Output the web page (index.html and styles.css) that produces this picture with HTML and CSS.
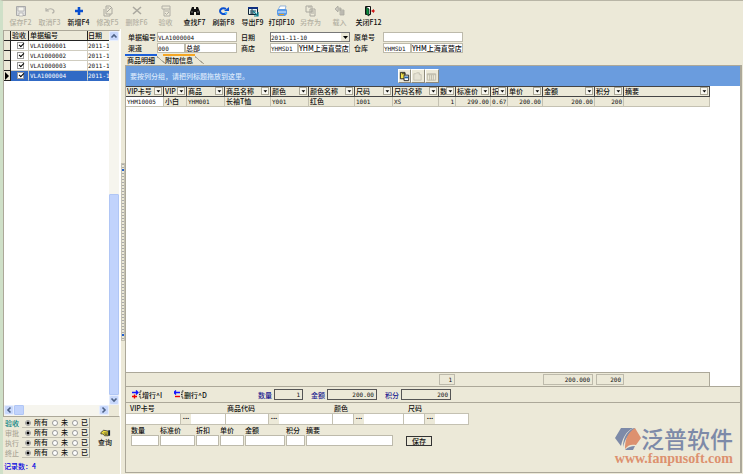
FILE: index.html
```
<!DOCTYPE html>
<html lang="zh-CN">
<head>
<meta charset="utf-8">
<title>单据管理</title>
<link rel="stylesheet" href="styles.css">
</head>
<body>
<svg class="defs" aria-hidden="true">
  <symbol id="down" viewBox="0 0 8 8"><path d="M2 3h5L4.500 6z" fill="#000"/></symbol>
  <symbol id="chev" viewBox="0 0 8 8"><path d="M1.500 5.500L4 3l2.500 2.500" fill="none" stroke="#4d6185" stroke-width="1.600"/></symbol>
  <symbol id="rowadd" viewBox="0 0 10 9"><path d="M0 2.500h6M4 .5l2 2-2 2" stroke="#11f" fill="none" stroke-width="1.300"/><path d="M0 6.500h5M2.500 4.500v4" stroke="#e00" stroke-width="1.400"/><path d="M9.500 1H8v7h1.500M8 4.500H7" stroke="#222" fill="none" stroke-dasharray="1.500 .6"/></symbol>
  <symbol id="rowdel" viewBox="0 0 10 9"><path d="M0 2.500h6M2 .5l-2 2 2 2" stroke="#11f" fill="none" stroke-width="1.300"/><path d="M1 6.500h5" stroke="#e00" stroke-width="1.400"/><path d="M9.500 1H8v7h1.500M8 4.500H7" stroke="#222" fill="none" stroke-dasharray="1.500 .6"/></symbol>
</svg>

<nav class="toolbar">
  <button disabled><svg viewBox="0 0 12 12"><path d="M1.500 1.500h9v9h-9z" fill="#ddd" stroke="#aaa"/><path d="M3 2h6v4H3zM4 8h4v3H4z" fill="#f6f5ee" stroke="#aaa" stroke-width=".7"/></svg>保存F2</button>
  <button disabled><svg viewBox="0 0 12 12"><path d="M2 3v3h3M2 6c2-3 7-3 8 0 0 2-1 2-2 2" fill="none" stroke="#b4b2aa" stroke-width="1.200"/></svg>取消F3</button>
  <button><svg viewBox="0 0 12 12"><path d="M6 2v8M2 6h8" stroke="#0a50d0" stroke-width="2.600"/></svg>新增F4</button>
  <button disabled><svg viewBox="0 0 12 12"><path d="M4 1h4l2 2v6H4zM2 4v7h6V9M5 7l4-4M5 3h2" fill="none" stroke="#aaa89f"/></svg>修改F5</button>
  <button disabled><svg viewBox="0 0 12 12"><path d="M2 2l8 7M10 2L2 9" stroke="#aaa89f" stroke-width="1.600"/></svg>删除F6</button>
  <button disabled><svg viewBox="0 0 12 12"><path d="M2 1h8v3H2zM4 4v7h6V4M5 6h4M5 8l1.500 1.500L9 7" fill="none" stroke="#b0aea5"/></svg>验收</button>
  <button><svg viewBox="0 0 12 12"><path d="M3 2h2v2h2V2h2l2 5v3H7V7H5v3H1V7z" fill="#111"/><path d="M3 6v2M9 6v2" stroke="#999" stroke-width=".7"/></svg>查找F7</button>
  <button><svg viewBox="0 0 12 12"><path d="M8 8.500C5 10 2 8 2 6s3-4 6-2" fill="none" stroke="#0a50d0" stroke-width="2"/><path d="M6 6h5V2z" fill="#0a50d0"/><circle cx="8" cy="8" r="1.300" fill="#4ab0ff"/></svg>刷新F8</button>
  <button><svg viewBox="0 0 12 12"><path d="M1.500 2.500h9v7h-9z" fill="#dff1f4" stroke="#123"/><path d="M1 3h10" stroke="#103080" stroke-width="2"/><path d="M3 6h6M3 8h4M5 4v5" stroke="#245"/><path d="M6 6l5 5M7 11h4V7" stroke="#0c8090" stroke-width="1.200" fill="none"/></svg>导出F9</button>
  <button><svg viewBox="0 0 12 12"><path d="M4 1h6L9 5H2z" fill="#fff" stroke="#6a9ad0" stroke-width=".7"/><path d="M1 5l2-1h7l1 1v4l-2 2H2L1 9z" fill="#5b9ae6"/><path d="M2 7h8" stroke="#e3f1ff"/><path d="M3 9.500h5" stroke="#e8a020"/></svg>打印F10</button>
  <button disabled><svg viewBox="0 0 12 12"><path d="M1 1h6v6H1zM3 2h3M5 4h5v7H5zM6 6h3M6 8h3" fill="none" stroke="#aaa89f"/></svg>另存为</button>
  <button disabled><svg viewBox="0 0 12 12"><path d="M1 4l3-3v2h3v2H4v2zM6 5h4v5H6zM7 7h3M7 9h3" fill="#c8c6bd" stroke="#aaa89f" stroke-width=".8"/></svg>载入</button>
  <button><svg viewBox="0 0 12 12"><path d="M2.500 1.500h5v8h-5z" fill="#fff" stroke="#111"/><path d="M3 2l3 2v7L3 9z" fill="#0a9040" stroke="#111" stroke-width=".7"/><path d="M11 4v4L8 6z" fill="#d01818"/><path d="M10 6h1.500" stroke="#d01818" stroke-width="2"/></svg>关闭F12</button>
</nav>

<div class="work">
  <aside class="side">
    <div class="list">
      <div class="list-view">
        <table class="docs">
          <colgroup><col class="w-ind"><col class="w-chk"><col class="w-no"><col></colgroup>
          <thead><tr><th></th><th>验收</th><th>单据编号</th><th>日期</th></tr></thead>
          <tbody>
            <tr><th></th><td><input type="checkbox" checked aria-label="验收"></td><td>VLA1000001</td><td>2011-1</td></tr>
            <tr><th></th><td><input type="checkbox" checked aria-label="验收"></td><td>VLA1000002</td><td>2011-1</td></tr>
            <tr><th></th><td><input type="checkbox" checked aria-label="验收"></td><td>VLA1000003</td><td>2011-1</td></tr>
            <tr class="current"><th><svg viewBox="0 0 5 8"><path d="M1 0l4 4-4 4z"/></svg></th><td><input type="checkbox" checked aria-label="验收"></td><td>VLA1000004</td><td>2011-1</td></tr>
          </tbody>
        </table>
      </div>
      <div class="vbar"><button aria-label="向上"><svg><use href="#chev"/></svg></button><i class="gap"></i><i class="thumb"></i><button aria-label="向下" class="flip"><svg><use href="#chev"/></svg></button></div>
      <div class="hbar"><button aria-label="向左" class="left"><svg><use href="#chev"/></svg></button><i class="thumb"></i><i class="gap"></i><button aria-label="向右" class="right"><svg><use href="#chev"/></svg></button></div>
    </div>
    <div class="query">
      <div class="filters">
        <fieldset class="on"><legend>验收</legend><div><label><input type="radio" name="a" checked>所有</label><label><input type="radio" name="a">未</label><label><input type="radio" name="a">已</label></div></fieldset>
        <fieldset><legend>审批</legend><div><label><input type="radio" name="b" checked>所有</label><label><input type="radio" name="b">未</label><label><input type="radio" name="b">已</label></div></fieldset>
        <fieldset><legend>执行</legend><div><label><input type="radio" name="c" checked>所有</label><label><input type="radio" name="c">未</label><label><input type="radio" name="c">已</label></div></fieldset>
        <fieldset><legend>终止</legend><div><label><input type="radio" name="d" checked>所有</label><label><input type="radio" name="d">未</label><label><input type="radio" name="d">已</label></div></fieldset>
      </div>
      <button class="find"><svg viewBox="0 0 12 8"><path d="M1 3.500L4 1l5 1v5H5L3 5H1z" fill="#f0e040" stroke="#222" stroke-width=".8"/><path d="M9 1h2v6H9z" fill="#123"/><path d="M4 4h4M5 5.500h3" stroke="#222" stroke-width=".7"/></svg>查询</button>
    </div>
    <p class="count">记录数：4</p>
  </aside>
  <div class="splitter"><i></i></div>

  <main class="main">
    <form class="head">
      <label for="no">单据编号</label><input id="no" class="wide" value="VLA1000004">
      <label for="date">日期</label><span class="combo"><select id="date"><option>2011-11-10</option></select><svg><use href="#down"/></svg></span>
      <label for="orig">原单号</label><input id="orig" class="wide">
      <label for="chan">渠道</label><input id="chan" value="000"><input class="zh" value="总部" aria-label="渠道名称">
      <label for="shop">商店</label><input id="shop" value="YHMSD1"><input class="zh" value="YHM上海直营店" aria-label="商店名称">
      <label for="store">仓库</label><input id="store" value="YHMSD1"><input class="zh" value="YHM上海直营店" aria-label="仓库名称">
    </form>
    <div class="tabs"><button class="active">商品明细</button><button>附加信息</button></div>
    <section class="panel">
      <div class="group"><span>要按列分组，请把列标题拖放到这里。</span>
        <div class="tools">
          <button aria-label="复制"><svg viewBox="0 0 12 12"><path d="M1.500 1.500h5v7h-5z" fill="#f5e54a" stroke="#222"/><path d="M5.500 4.500h5v6h-5z" fill="#fff" stroke="#222"/><path d="M6 6h4v2H6z" fill="#26a"/><path d="M3 3h4" stroke="#222"/></svg></button>
          <button aria-label="粘贴"><svg viewBox="0 0 12 12"><path d="M2 10V3h2l1-1h3v2h2v6z" fill="#e6e3d4" stroke="#c4c1b2"/></svg></button>
          <button aria-label="列"><svg viewBox="0 0 12 12"><path d="M1.500 3h9v7h-9zM1 4h10M4 4v6M6 4v6M8 4v6" fill="none" stroke="#bdbaab"/></svg></button>
        </div>
      </div>
      <div class="sheet">
        <table class="items">
          <colgroup><col class="c38"><col class="c23"><col class="c38"><col class="c46"><col class="c38"><col class="c46"><col class="c38"><col class="c46"><col class="c17"><col class="c35"><col class="c17"><col class="c35"><col class="c52"><col class="c29"><col class="c86"></colgroup>
          <thead><tr>
            <th><div><span>VIP卡号</span><button aria-label="筛选"><svg><use href="#down"/></svg></button></div></th>
            <th><div><span>VIP</span><button aria-label="筛选"><svg><use href="#down"/></svg></button></div></th>
            <th><div><span>商品</span><button aria-label="筛选"><svg><use href="#down"/></svg></button></div></th>
            <th><div><span>商品名称</span><button aria-label="筛选"><svg><use href="#down"/></svg></button></div></th>
            <th><div><span>颜色</span><button aria-label="筛选"><svg><use href="#down"/></svg></button></div></th>
            <th><div><span>颜色名称</span><button aria-label="筛选"><svg><use href="#down"/></svg></button></div></th>
            <th><div><span>尺码</span><button aria-label="筛选"><svg><use href="#down"/></svg></button></div></th>
            <th><div><span>尺码名称</span><button aria-label="筛选"><svg><use href="#down"/></svg></button></div></th>
            <th><div><span>数</span><button aria-label="筛选"><svg><use href="#down"/></svg></button></div></th>
            <th><div><span>标准价</span><button aria-label="筛选"><svg><use href="#down"/></svg></button></div></th>
            <th><div><span>折</span><button aria-label="筛选"><svg><use href="#down"/></svg></button></div></th>
            <th><div><span>单价</span><button aria-label="筛选"><svg><use href="#down"/></svg></button></div></th>
            <th><div><span>金额</span><button aria-label="筛选"><svg><use href="#down"/></svg></button></div></th>
            <th><div><span>积分</span><button aria-label="筛选"><svg><use href="#down"/></svg></button></div></th>
            <th><div><span>摘要</span><button aria-label="筛选"><svg><use href="#down"/></svg></button></div></th>
          </tr></thead>
          <tbody><tr><td class="focus">YHM10005</td><td class="zh">小白</td><td>YHM001</td><td class="zh">长袖T恤</td><td>Y001</td><td class="zh">红色</td><td>1001</td><td>XS</td><td class="num">1</td><td class="num">299.00</td><td class="num">0.67</td><td class="num">200.00</td><td class="num">200.00</td><td class="num">200</td><td></td></tr></tbody>
        </table>
        <div class="totals"><output class="t-qty">1</output><output class="t-sum">200.000</output><output class="t-pts">200</output></div>
      </div>
      <div class="summary">
        <button><svg><use href="#rowadd"/></svg>增行^I</button>
        <button><svg><use href="#rowdel"/></svg>删行^D</button>
        <label class="s-qty">数量<output>1</output></label>
        <label class="s-sum">金额<output>200.00</output></label>
        <label class="s-pts">积分<output>200</output></label>
      </div>
      <form class="entry">
        <div class="codes">
          <div><label for="vip">VIP卡号</label><span><input id="vip" class="c55"><button type="button">...</button><input class="c35" aria-label="VIP名称"></span></div>
          <div><label for="code">商品代码</label><span><input id="code" class="c43"><button type="button">...</button><input class="c54" aria-label="商品名称"></span></div>
          <div><label for="color">颜色</label><span><input id="color" class="c21"><button type="button">...</button><input class="c40" aria-label="颜色名称"></span></div>
          <div><label for="size">尺码</label><span><input id="size" class="c21"><button type="button">...</button><input class="c34" aria-label="尺码名称"></span></div>
        </div>
        <div class="values">
          <label class="c28">数量<input></label><label class="c35">标准价<input></label><label class="c23">折扣<input></label><label class="c24">单价<input></label><label class="c40">金额<input></label><label class="c19">积分<input></label><label class="c87">摘要<input></label>
          <button type="button" class="save">保存</button>
        </div>
        <div class="brand">
          <div class="brand-name"><svg viewBox="0 0 26 24"><path d="M6 1h12C11 5 8 10 6 19L0 11z" fill="#7d8aa8"/><path d="M8 20C8 11 12 4 19 1h1l-3 5c-4 2-7 6-9 14z" fill="#7d8aa8"/><path d="M20 1l6 10-5 7c-5-1-8 0-11 4 0-9 2-16 10-21z" fill="#dd916f"/><path d="M10 23c3-3 6-4 10-4l-2 4z" fill="#7d8aa8"/></svg><span>泛普软件</span></div>
          <div class="brand-url">www.fanpusoft.com</div>
        </div>
      </form>
    </section>
  </main>
</div>
</body>
</html>
```
FILE: styles.css
```
* { box-sizing: border-box; }
html, body { height: 100%; }
body {
  margin: 0;
  display: flex;
  flex-direction: column;
  background: #ece9d8;
  border-top: 1px solid #b8b5a6;
  border-left: 3px solid #cfe0c8;
  font: 500 7px/10px "Noto Sans CJK SC", sans-serif;
  color: #111;
}
button, input, select { font: inherit; color: inherit; margin: 0; padding: 0; border: 0; border-radius: 0; background: none; }
svg { display: block; }
i { display: block; }
p { margin: 0; }
.defs { position: absolute; width: 0; height: 0; }

.toolbar { display: flex; height: 28px; padding: 4px 0 0 3px; flex: none; }
.toolbar button { width: 29px; display: flex; flex-direction: column; align-items: center; white-space: nowrap; }
.toolbar svg { width: 12px; height: 12px; }
.toolbar button:disabled { color: #b3b0a2; }

.work { flex: 1; display: flex; min-height: 0; }
.side { width: 117px; flex: none; display: flex; flex-direction: column; padding-top: 1px; }
.list { flex: 1; min-height: 0; display: grid; grid-template: 1fr 11px / 1fr 10px; border: 1px solid #aca899; border-right-color: #fff; }
.list-view { background: #fff; overflow: hidden; }
table { border-collapse: separate; border-spacing: 0; table-layout: fixed; }
th, td { padding: 0; height: 10px; line-height: 9px; font-weight: 500; text-align: left; white-space: nowrap; overflow: hidden; }
td, .head input, .head select, output { font-family: "DejaVu Sans Mono", "Noto Sans CJK SC", monospace; font-size: 6px; }
.head .zh, td.zh { font-family: "Noto Sans CJK SC", sans-serif; font-size: 7px; }
.docs { width: 100%; }
.w-ind { width: 7px; }
.w-chk { width: 18px; }
.w-no { width: 59px; }
.docs th { background: #ece9d8; border-right: 1px solid #222; border-bottom: 1px solid #222; }
.docs td { border-right: 1px solid #d0cdc0; border-bottom: 1px solid #d0cdc0; padding-left: 1px; }
.docs td:last-child, .docs th:last-child { border-right: 0; padding-left: 0; }
.docs thead th { padding-left: 1px; }
.docs tbody th svg { width: 5px; height: 8px; }
.docs .current td { background: #316ac5; color: #fff; border-bottom-color: #316ac5; }
input[type="checkbox"] { appearance: none; display: block; width: 7px; height: 7px; margin: 0 auto; background: #fff; border: 1px solid #999; position: relative; }
input[type="checkbox"]::after { content: ""; position: absolute; left: 1px; top: 0; width: 4px; height: 2px; border: solid #000; border-width: 0 0 1px 1px; transform: rotate(-45deg); }
.vbar { display: flex; flex-direction: column; background: #f6f5ee; }
.vbar button, .hbar button { width: 10px; height: 10px; flex: none; background: #c8d8fb; border: 1px solid #e6eeff; border-radius: 2px; }
.vbar svg, .hbar svg { width: 8px; height: 8px; }
.thumb { background: #c1d3fc; border: 1px solid #b0c6f5; border-radius: 1px; }
.vbar .gap { flex: 153; }
.vbar .thumb { flex: 200; }
.hbar { display: flex; background: #f6f5ee; }
.hbar .gap { flex: 1; }
.hbar .thumb { width: 10px; height: 10px; }
.flip { transform: rotate(180deg); }
.left { transform: rotate(-90deg); }
.right { transform: rotate(90deg); }

.query { display: flex; padding-top: 1px; }
.filters { width: 87px; }
fieldset { display: flex; margin: 0; padding: 0 0 0 2px; border: 0; color: #aca899; height: 10px; }
legend { float: left; width: 17px; padding: 0; }
.filters .on { color: #008080; }
fieldset div { display: flex; flex: 1; gap: 4px; padding-left: 3px; color: #111; border-right: 1px solid #aca899; border-bottom: 1px solid #c4c1b2; line-height: 9px; }
fieldset label { display: flex; align-items: center; gap: 3px; white-space: nowrap; }
input[type="radio"] { appearance: none; width: 6px; height: 6px; border: 1px solid #999; border-radius: 50%; background: #fff; }
input[type="radio"]:checked { background: radial-gradient(#000 1px, #fff 2px); }
.find { flex: 1; display: flex; flex-direction: column; align-items: center; justify-content: center; }
.find svg { width: 11px; height: 8px; }
.count { color: #0000e0; height: 16px; line-height: 16px; padding-left: 1px; }

.splitter { width: 5px; flex: none; display: flex; align-items: center; justify-content: center; border-left: 1px solid #fff; }
.splitter i { width: 4px; height: 178px; border: 1px solid #c4c1b2; background: linear-gradient(#2060d0, #2060d0) center 5px / 2px 2px no-repeat, linear-gradient(#2060d0, #2060d0) center 170px / 2px 2px no-repeat, repeating-linear-gradient(#aaa 0 1px, #ece9d8 1px 3px); }

.main { flex: 1; min-width: 0; display: flex; flex-direction: column; padding: 3px 1px 1px 0; }
.head { display: grid; grid-template-columns: 29px 28px 52px 4px 29px 28px 52px 4px 29px 28px 52px; grid-auto-rows: 10px; row-gap: 1px; padding-left: 3px; }
.head label { white-space: nowrap; }
.head label:nth-of-type(2), .head label:nth-of-type(5) { grid-column: 5; }
.head label:nth-of-type(3), .head label:nth-of-type(6) { grid-column: 9; }
.head .wide, .combo { grid-column-end: span 2; }
.head input, .head select { width: 100%; height: 10px; min-width: 0; background: #fff; border: 1px solid #bdbaab; line-height: 8px; }
.combo { position: relative; }
.head .combo select { appearance: none; display: block; border-color: #777; padding-top: 1px; }
.combo svg { position: absolute; right: 1px; top: 1px; width: 8px; height: 8px; background: #ece9d8; pointer-events: none; }

.tabs { display: flex; height: 12px; padding-top: 1px; flex: none; }
.tabs button { height: 11px; padding: 0 2px; border-top: 2px solid #f5a623; line-height: 9px; position: relative; }
.tabs button::after { content: ""; position: absolute; left: 100%; top: -1px; width: 9px; height: 11px; background: linear-gradient(40deg, transparent 47%, #aca899 48% 54%, transparent 55%); }
.tabs .active { border-top-color: #1c5fd8; margin-right: 6px; }

.panel { flex: 1; min-height: 0; display: flex; flex-direction: column; border: 1px solid #aca899; border-right-width: 2px; }
.group { height: 20px; flex: none; display: flex; align-items: center; background: #6a9cde; color: #dce9fb; padding-left: 4px; }
.group span { width: 268px; }
.tools { display: flex; }
.tools button { width: 13px; height: 14px; background: #ece9d8; border: 1px solid; border-color: #fff #8d8a7c #8d8a7c #fff; }
.tools button + button { width: 14px; }
.tools svg { width: 11px; height: 11px; }
.sheet { flex: 1; min-height: 0; background: #fff; display: flex; flex-direction: column; justify-content: space-between; align-items: flex-start; }
.items { width: 584px; background: #ece9d8; }
.items th { border: solid #444; border-width: 1px 1px 1px 0; height: 11px; }
.items th div { display: flex; justify-content: space-between; height: 9px; padding-left: 1px; }
.items th span { overflow: hidden; flex: 1; min-width: 0; }
.items th button { width: 8px; height: 8px; flex: none; border: 1px solid #aaa797; background: #f8f7f0; margin-right: 1px; }
.items th svg { width: 6px; height: 6px; }
.items td { border-right: 1px solid #c4c1b2; border-bottom: 1px solid #c4c1b2; padding: 0 1px; }
.items td.focus { background: #fff; }
.items td.num { text-align: right; }
.c17 { width: 17px; } .c19 { width: 19px; } .c21 { width: 21px; } .c23 { width: 23px; } .c24 { width: 24px; }
.c28 { width: 28px; } .c29 { width: 29px; } .c34 { width: 34px; } .c35 { width: 35px; } .c38 { width: 38px; }
.c40 { width: 40px; } .c43 { width: 43px; } .c46 { width: 46px; } .c52 { width: 52px; } .c54 { width: 54px; }
.c55 { width: 55px; } .c86 { width: 86px; } .c87 { width: 87px; }
.totals { display: flex; width: 584px; height: 14px; padding: 1px 0 1px 313px; background: #ece9d8; border: solid #aca899; border-width: 1px 1px 0 0; }
output { text-align: right; padding-right: 2px; display: block; }
.totals output { border: 1px solid #bdbaab; }
.t-qty { width: 16px; margin-right: 88px; }
.t-sum { width: 50px; margin-right: 3px; }
.t-pts { width: 28px; }
.summary { display: flex; align-items: center; height: 17px; flex: none; padding-left: 6px; border: solid #aca899; border-width: 1px 0; }
.summary button { display: flex; align-items: center; width: 42px; white-space: nowrap; }
.summary svg { width: 10px; height: 9px; }
.summary label { display: flex; align-items: center; gap: 2px; color: #1a1a90; margin-right: 8px; white-space: nowrap; }
.summary output { border: 1px solid #555; color: #111; height: 11px; line-height: 9px; width: 50px; }
.s-qty { margin-left: 42px; }
.summary .s-qty output { width: 29px; }
.entry { height: 69px; flex: none; position: relative; }
.codes { display: flex; }
.codes div { display: flex; flex-direction: column; }
.codes label { padding-left: 1px; }
.codes div:first-child label, .codes div:last-child label { padding-left: 4px; }
.codes span { display: flex; border: solid #c4c1b2; border-width: 1px 0; }
.codes input { height: 10px; background: #fff; border-right: 1px solid #c4c1b2; }
.codes button { width: 10px; height: 10px; font: 700 8px/6px "Liberation Sans", sans-serif; padding-bottom: 4px; }
.values { display: flex; gap: 1px; padding: 0 0 0 5px; }
.values label { white-space: nowrap; display: flex; flex-direction: column; }
.values input { width: 100%; height: 11px; background: #fff; border: 1px solid #bdbaab; }
.save { align-self: flex-end; width: 26px; height: 10px; line-height: 8px; margin-left: 12px; border: 1px solid #333; }
.brand { position: absolute; right: 7px; bottom: 6px; }
.brand-name { display: flex; align-items: center; justify-content: flex-end; height: 26px; color: #7d8aa8; }
.brand-name svg { width: 26px; height: 24px; }
.brand-name span { font-size: 23px; line-height: 23px; font-weight: 500; padding-bottom: 2px; }
.brand-url { font: 700 14px/14px "Liberation Serif", serif; color: #dd916f; text-align: right; }
```
